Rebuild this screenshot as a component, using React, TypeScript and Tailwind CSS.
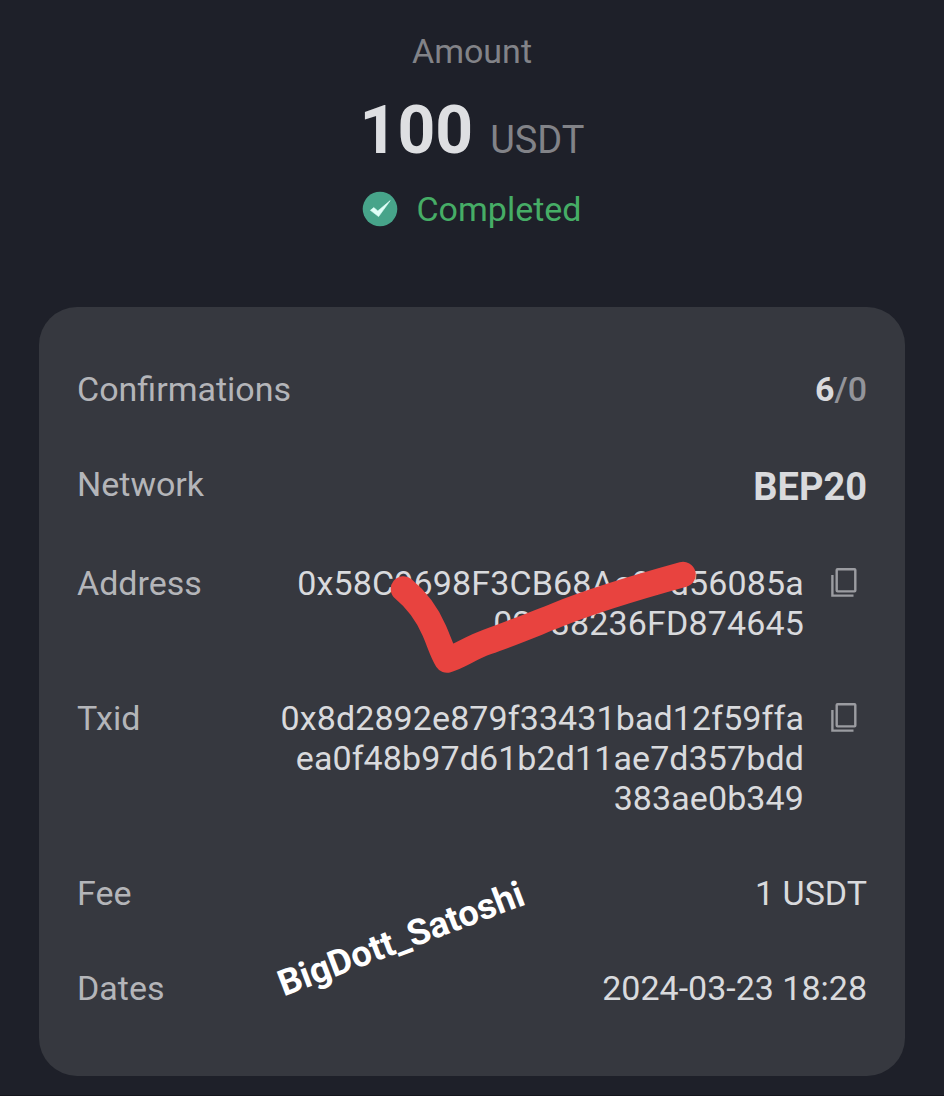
import React from 'react';

interface DetailRowProps {
  label: string;
  copyable?: boolean;
  className?: string;
  children: React.ReactNode;
}

const CopyIcon: React.FC = () => (
  <svg className="mt-[5px] ml-[27px] h-[30px] w-[27px] shrink-0" viewBox="0 0 27 30" fill="none" stroke="#9b9ca1" strokeWidth="2.4">
    <rect x="5.7" y="1.2" width="18.6" height="22.2" rx="0.8" />
    <path d="M1.4 7V27.6H22.5" />
  </svg>
);

const DetailRow: React.FC<DetailRowProps> = ({ label, copyable, className = '', children }) => {
  return (
    <div className={`flex items-start ${className}`}>
      <dt className="text-[#b4b5b9]">{label}</dt>
      <dd className="ml-auto text-right text-[#d9dadd]">{children}</dd>
      {copyable && (
        <button className="mr-[9px] flex">
          <CopyIcon />
        </button>
      )}
    </div>
  );
};

const StatusIcon: React.FC = () => (
  <svg className="h-[36px] w-[36px]" viewBox="0 0 36 36">
    <circle cx="18" cy="18" r="17.3" fill="#47a48a" />
    <path d="M8.4 19.3L11.8 16.6L15.8 19.9L28.2 9.6L16.6 25.6Z" fill="#e0fff8" stroke="#e0fff8" strokeWidth="0.6" />
  </svg>
);

// Hand drawn tick over the address
const TickMark: React.FC = () => (
  <svg className="pointer-events-none absolute top-[550px] left-[380px]" width="330" height="140" viewBox="380 550 330 140" fill="none">
    <path
      d="M403.5 589C418 601 427 614 434 630C439 641 442 652 447 660C460 656 470 648 487 642C510 634 534 624 557 615C596 599 645 585 683 574.5"
      stroke="#e8433f"
      strokeWidth="25.5"
      strokeLinecap="round"
      strokeLinejoin="round"
    />
  </svg>
);

const App: React.FC = () => {
  return (
    <main className="relative h-[1096px] w-[944px] overflow-hidden bg-[#1e2029] px-[39px] pt-[31px] font-[Roboto,sans-serif] text-[34px] leading-[40px]">
      <header className="flex h-[276px] flex-col items-center">
        <p className="text-[#828388]">Amount</p>
        <div className="mt-[20px] flex h-[79px] items-baseline gap-[17px] leading-[80px]">
          <span className="text-[66px] font-bold text-[#dedfe2]">100</span>
          <span className="text-[38px] text-[#828388]">USDT</span>
        </div>
        <div className="mt-[19px] flex items-center gap-[18px]">
          <StatusIcon />
          <span className="text-[#46ad66]">Completed</span>
        </div>
      </header>

      <dl className="flex h-[769px] flex-col gap-[55px] rounded-[38px] bg-[#36383f] px-[38px] pt-[62px]">
        <DetailRow label="Confirmations">
          <span className="font-bold">6</span>
          <span className="font-medium text-[#93949a]">/0</span>
        </DetailRow>
        <DetailRow label="Network" className="h-[44px]">
          <span className="text-[38px] leading-[46px] font-bold">BEP20</span>
        </DetailRow>
        <DetailRow label="Address" copyable>
          <span className="tracking-[0.15px]">
            0x58C9698F3CB68Ac9Fd56085a
            <br />
            02F38236FD874645
          </span>
        </DetailRow>
        <DetailRow label="Txid" copyable>
          <span className="tracking-[0.1px]">
            0x8d2892e879f33431bad12f59ffa
            <br />
            ea0f48b97d61b2d11ae7d357bdd
            <br />
            383ae0b349
          </span>
        </DetailRow>
        <DetailRow label="Fee">1 USDT</DetailRow>
        <DetailRow label="Dates">2024-03-23 18:28</DetailRow>
      </dl>

      <TickMark />
      <span className="absolute top-[919px] left-[271px] rotate-[-20.8deg] text-[36.2px] font-bold text-white">
        BigDott_Satoshi
      </span>
      <div className="absolute inset-x-0 bottom-0 h-px bg-[#15161d]" />
    </main>
  );
};

export default App;
